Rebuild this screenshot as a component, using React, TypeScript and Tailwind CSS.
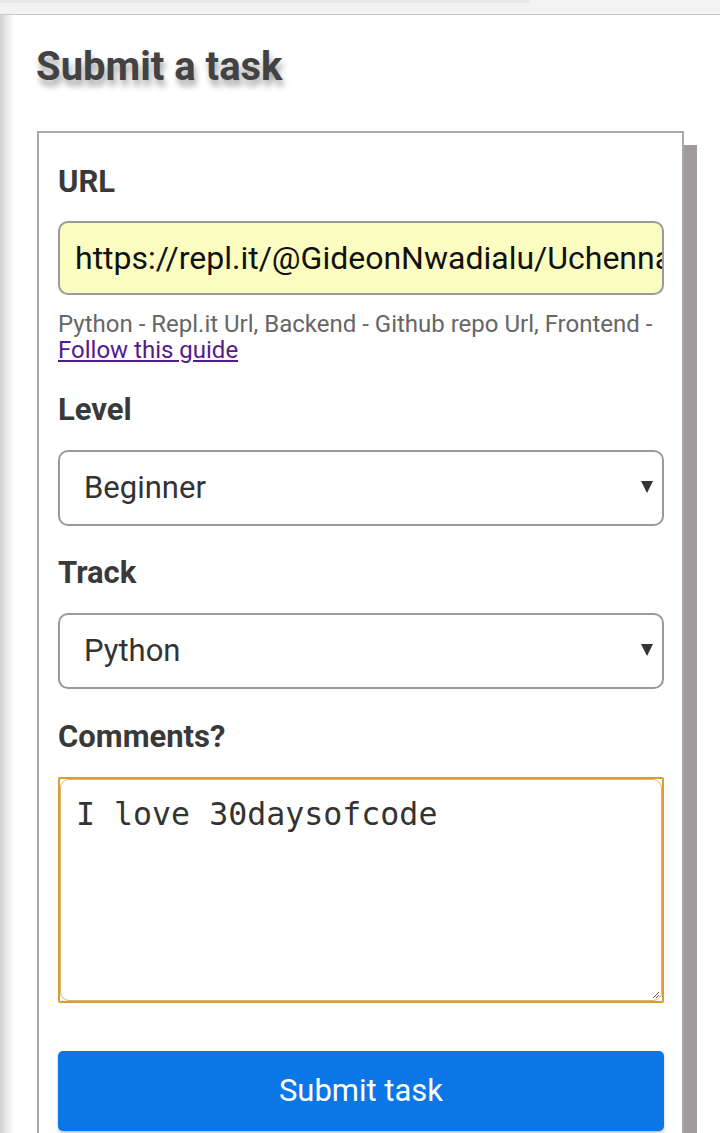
import React from "react";

function Label({ children }: { children: React.ReactNode }) {
  return (
    <div className="text-[31px] font-bold leading-[38px] text-[#393939]">{children}</div>
  );
}

function SelectBox({ value, top }: { value: string; top: string }) {
  return (
    <div
      className={`${top} flex h-[76px] items-center rounded-[10px] border-2 border-[#9a9a9a] bg-white pl-[24px] pr-[9px] text-[31px] text-[#333]`}
    >
      <span className="flex-1">{value}</span>
      <svg width="12" height="12" viewBox="0 0 12 12" className="mt-[-2px]">
        <path d="M0 0H12L6 12Z" fill="#333" />
      </svg>
    </div>
  );
}

export default function App() {
  return (
    <div className="min-h-screen bg-white font-['Roboto','Liberation_Sans',sans-serif]">
      <div className="flex h-[15px] border-b border-[#c9c9c9] bg-[#f3f3f3]">
        <div className="h-[3px] w-[530px] rounded-br-[3px] bg-[#e9e9e9]" />
      </div>
      <div className="flex">
        <div className="w-[14px] shrink-0 bg-[linear-gradient(to_right,#cfcfcf,#e6e6e6_40%,#ffffff)]" />
        <div className="flex-1 pb-[40px]">
          <h1 className="ml-[22px] mt-[27px] text-[40px] font-bold leading-[49px] text-[#424242] [text-shadow:2px_6px_6px_rgba(0,0,0,0.35)]">
            Submit a task
          </h1>
          <div className="ml-[23px] mt-[40px] w-[647px] border-2 border-[#aaaaaa] bg-white pb-[40px] pl-[19px] pr-[18px] pt-[30px] shadow-[13px_14px_0_#a29b9b]">
            <Label>URL</Label>
            <input
              readOnly
              value="https://repl.it/@GideonNwadialu/Uchenna"
              className="mt-[20px] block h-[74px] w-full rounded-[10px] border-2 border-[#9a9a9a] bg-[#fbfdc1] pl-[15px] pr-0 text-[32px] text-[#111] outline-none"
            />
            <div className="mt-[16px] text-[24px] leading-[26px] text-[#666]">
              Python - Repl.it Url, Backend - Github repo Url, Frontend -
              <br />
              <a href="#" className="text-[#551a8b] underline">
                Follow this guide
              </a>
            </div>

            <div className="mt-[28px]">
              <Label>Level</Label>
            </div>
            <SelectBox value="Beginner" top="mt-[21px]" />

            <div className="mt-[28px]">
              <Label>Track</Label>
            </div>
            <SelectBox value="Python" top="mt-[21px]" />

            <div className="mt-[29px]">
              <Label>Comments?</Label>
            </div>
            <div className="relative mt-[21px] h-[226px] rounded-[2px] border-2 border-[#d5a02f]">
              <div className="h-full rounded-[9px] border border-[#d9b66a] pl-[15px] pt-[16px] font-['DejaVu_Sans_Mono','Liberation_Mono',monospace] text-[31.6px] leading-[37px] text-[#333]">
                I love 30daysofcode
              </div>
              <svg
                width="8"
                height="8"
                viewBox="0 0 8 8"
                className="absolute bottom-[2px] right-[2px]"
              >
                <path d="M7 1L1 7M7 4L4 7" stroke="#555" strokeWidth="1" />
              </svg>
            </div>

            <button className="mt-[48px] flex h-[80px] w-full items-center justify-center rounded-[5px] bg-[#0b77e6] text-[31px] text-white shadow-[0_2px_3px_rgba(0,0,0,0.25)]">
              Submit task
            </button>
          </div>
        </div>
      </div>
    </div>
  );
}
